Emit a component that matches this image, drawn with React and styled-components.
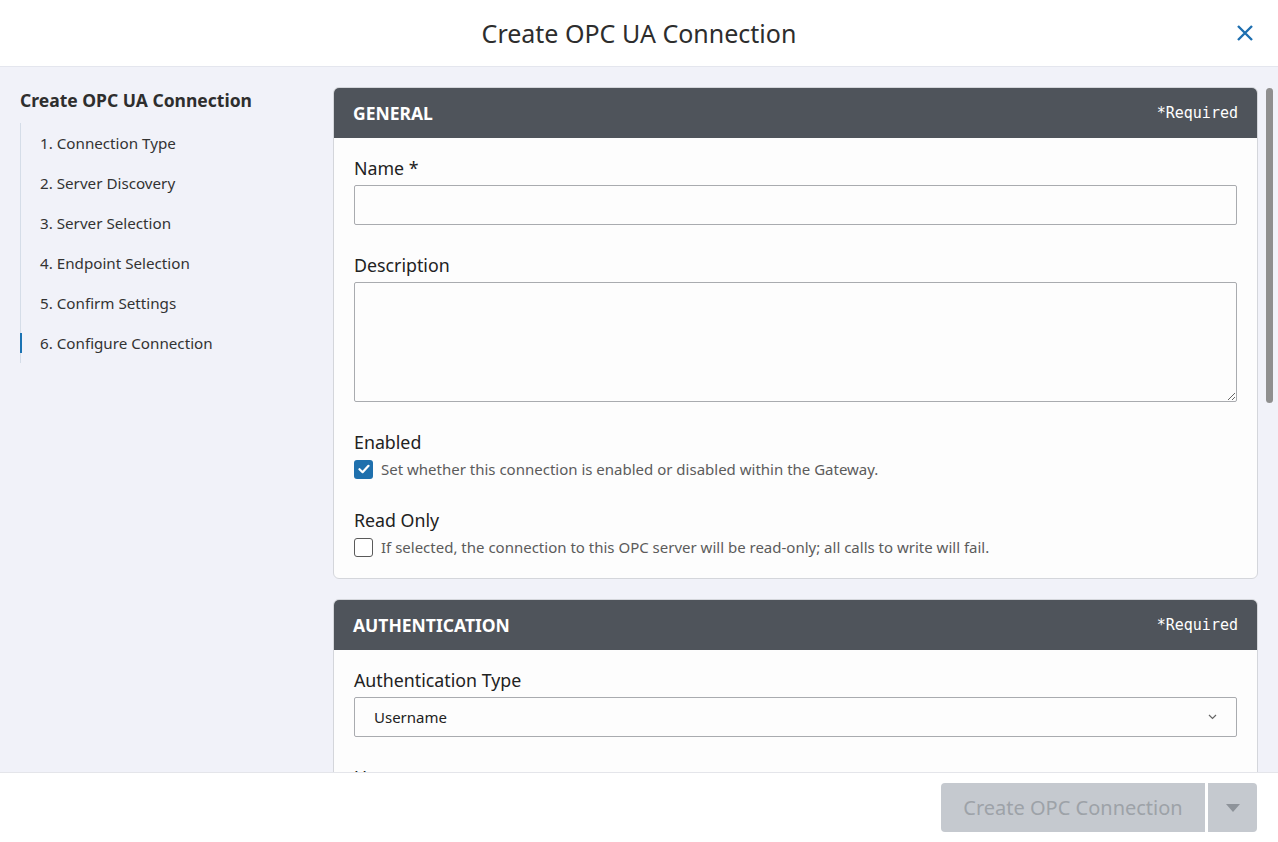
import React from "react";
import styled, { createGlobalStyle } from "styled-components";

const GlobalStyle = createGlobalStyle`
  html, body {
    margin: 0;
    height: 100%;
    overflow: hidden;
  }
  body {
    font-family: "Noto Sans", "Open Sans", sans-serif;
    background: #f1f2f9;
    color: #2b2b2b;
  }
  #root {
    height: 100%;
  }
  * {
    box-sizing: border-box;
  }
`;

const Page = styled.div`
  display: flex;
  flex-direction: column;
  height: 100vh;
`;

const Header = styled.header`
  flex: 0 0 67px;
  display: flex;
  align-items: center;
  justify-content: center;
  position: relative;
  background: #ffffff;
  border-bottom: 1px solid #e4e6ee;
`;

const HeaderTitle = styled.h1`
  margin: 0;
  font-size: 25px;
  font-weight: 400;
  color: #2d2d2d;
`;

const CloseButton = styled.button`
  position: absolute;
  right: 22px;
  top: 22px;
  width: 22px;
  height: 22px;
  padding: 0;
  border: none;
  background: none;
  display: flex;
  align-items: center;
  justify-content: center;
  cursor: pointer;
`;

const Body = styled.div`
  flex: 1;
  display: flex;
  min-height: 0;
`;

const Sidebar = styled.nav`
  flex: 0 0 333px;
  padding: 21px 20px 0 20px;
`;

const SidebarTitle = styled.h2`
  margin: 0 0 11px 0;
  font-size: 17.5px;
  font-weight: 700;
  color: #2e2e2e;
  line-height: 24px;
`;

const StepList = styled.ol`
  list-style: none;
  margin: 0;
  padding: 0;
  border-left: 1px solid #d5dde8;
`;

const Step = styled.li`
  position: relative;
  padding: 0 0 0 19px;
  height: 40px;
  display: flex;
  align-items: center;
  font-size: 15.2px;
  color: #333333;

  &::before {
    content: "";
    position: absolute;
    left: -1px;
    top: 10px;
    bottom: 10px;
    width: 2px;
    background: ${(p) => (p.$active ? "#1b73b3" : "transparent")};
  }
`;

const MainWrap = styled.div`
  flex: 1;
  position: relative;
  min-width: 0;
`;

const Main = styled.main`
  height: 100%;
  overflow: hidden;
  padding: 20px 20px 40px 0;
  display: flex;
  flex-direction: column;
  gap: 20px;
`;

const ScrollThumb = styled.div`
  position: absolute;
  right: 5px;
  top: 21px;
  width: 7px;
  height: 315px;
  border-radius: 4px;
  background: #8f8f8f;
`;

const Card = styled.section`
  flex: 0 0 auto;
  background: #fdfdfd;
  border: 1px solid #d4d6db;
  border-radius: 6px;
  overflow: hidden;
`;

const CardHeader = styled.div`
  height: 50px;
  background: #4f545b;
  display: flex;
  align-items: center;
  justify-content: space-between;
  padding: 0 19px;
`;

const CardTitle = styled.h3`
  margin: 0;
  font-size: 17.5px;
  font-weight: 700;
  color: #ffffff;
`;

const Required = styled.span`
  font-family: "DejaVu Sans Mono", "Liberation Mono", monospace;
  font-size: 15px;
  color: #ffffff;
`;

const CardBody = styled.div`
  padding: 18px 20px 20px 20px;
  display: flex;
  flex-direction: column;
  gap: 28px;
`;

const Field = styled.div`
  display: flex;
  flex-direction: column;
`;

const Label = styled.label`
  font-size: 17.8px;
  line-height: 24px;
  color: #222222;
  margin-bottom: ${(p) => (p.$tight ? "4px" : "5px")};
`;

const TextInput = styled.input`
  height: 40px;
  width: 100%;
  border: 1px solid #a9abaf;
  border-radius: 2px;
  background: #fdfdfd;
  font: inherit;
  padding: 0 19px;
`;

const TextArea = styled.textarea`
  height: 120px;
  width: 100%;
  border: 1px solid #a9abaf;
  border-radius: 2px;
  background: #fdfdfd;
  font: inherit;
  padding: 10px 19px;
  resize: vertical;
`;

const CheckRow = styled.div`
  display: flex;
  align-items: center;
  gap: 8px;
  height: 22px;
`;

const CheckBox = styled.span`
  flex: 0 0 19px;
  width: 19px;
  height: 19px;
  border-radius: 3px;
  display: flex;
  align-items: center;
  justify-content: center;
  background: ${(p) => (p.$checked ? "#1f70ad" : "#ffffff")};
  border: ${(p) => (p.$checked ? "none" : "1.5px solid #5a5a5a")};
`;

const Hint = styled.span`
  font-size: 15px;
  color: #5b5b5b;
`;

const Select = styled.div`
  height: 40px;
  border: 1px solid #a9abaf;
  border-radius: 2px;
  background: #fdfdfd;
  display: flex;
  align-items: center;
  justify-content: space-between;
  padding: 0 19px;
  font-size: 15px;
  color: #222222;
`;

const Footer = styled.footer`
  flex: 0 0 70px;
  background: #ffffff;
  border-top: 1px solid #e4e5ea;
  display: flex;
  align-items: center;
  justify-content: flex-end;
  padding: 0 21px 0 0;
  gap: 3px;
`;

const PrimaryButton = styled.button`
  height: 49px;
  width: ${(p) => (p.$split ? "49px" : "264px")};
  border: none;
  border-radius: ${(p) => (p.$split ? "0 4px 4px 0" : "4px 0 0 4px")};
  background: #c5c9cf;
  color: #9da2a8;
  font-family: inherit;
  font-size: 20px;
  display: flex;
  align-items: center;
  justify-content: center;
  cursor: not-allowed;
`;

function CheckMark() {
  return (
    <svg width="12" height="10" viewBox="0 0 12 10">
      <path d="M1.5 5.2 L4.6 8.2 L10.5 1.8" fill="none" stroke="#ffffff" strokeWidth="2.2" strokeLinecap="round" strokeLinejoin="round" />
    </svg>
  );
}

function Chevron() {
  return (
    <svg width="9" height="6" viewBox="0 0 9 6">
      <path d="M1 1 L4.5 4.5 L8 1" fill="none" stroke="#666" strokeWidth="1.2" />
    </svg>
  );
}

const steps = [
  "1. Connection Type",
  "2. Server Discovery",
  "3. Server Selection",
  "4. Endpoint Selection",
  "5. Confirm Settings",
  "6. Configure Connection",
];

export default function App() {
  return (
    <>
      <GlobalStyle />
      <Page>
        <Header>
          <HeaderTitle>Create OPC UA Connection</HeaderTitle>
          <CloseButton aria-label="Close">
            <svg width="18" height="18" viewBox="0 0 18 18">
              <path d="M2 2 L16 16 M16 2 L2 16" stroke="#1e6fb0" strokeWidth="2.4" />
            </svg>
          </CloseButton>
        </Header>
        <Body>
          <Sidebar>
            <SidebarTitle>Create OPC UA Connection</SidebarTitle>
            <StepList>
              {steps.map((s, i) => (
                <Step key={s} $active={i === steps.length - 1}>
                  {s}
                </Step>
              ))}
            </StepList>
          </Sidebar>
          <MainWrap>
            <Main>
              <Card>
                <CardHeader>
                  <CardTitle>GENERAL</CardTitle>
                  <Required>*Required</Required>
                </CardHeader>
                <CardBody>
                  <Field>
                    <Label>Name *</Label>
                    <TextInput />
                  </Field>
                  <Field>
                    <Label>Description</Label>
                    <TextArea />
                  </Field>
                  <Field>
                    <Label $tight>Enabled</Label>
                    <CheckRow>
                      <CheckBox $checked>
                        <CheckMark />
                      </CheckBox>
                      <Hint>Set whether this connection is enabled or disabled within the Gateway.</Hint>
                    </CheckRow>
                  </Field>
                  <Field>
                    <Label $tight>Read Only</Label>
                    <CheckRow>
                      <CheckBox />
                      <Hint>If selected, the connection to this OPC server will be read-only; all calls to write will fail.</Hint>
                    </CheckRow>
                  </Field>
                </CardBody>
              </Card>
              <Card>
                <CardHeader>
                  <CardTitle>AUTHENTICATION</CardTitle>
                  <Required>*Required</Required>
                </CardHeader>
                <CardBody>
                  <Field>
                    <Label>Authentication Type</Label>
                    <Select>
                      <span>Username</span>
                      <Chevron />
                    </Select>
                  </Field>
                  <Field>
                    <Label>Username</Label>
                    <TextInput />
                  </Field>
                  <Field>
                    <Label>Password</Label>
                    <TextInput type="password" />
                  </Field>
                </CardBody>
              </Card>
            </Main>
            <ScrollThumb />
          </MainWrap>
        </Body>
        <Footer>
          <PrimaryButton disabled>Create OPC Connection</PrimaryButton>
          <PrimaryButton $split disabled aria-label="More options">
            <svg width="14" height="8" viewBox="0 0 14 8">
              <path d="M0 0 H14 L7 8 Z" fill="#8e939a" />
            </svg>
          </PrimaryButton>
        </Footer>
      </Page>
    </>
  );
}
